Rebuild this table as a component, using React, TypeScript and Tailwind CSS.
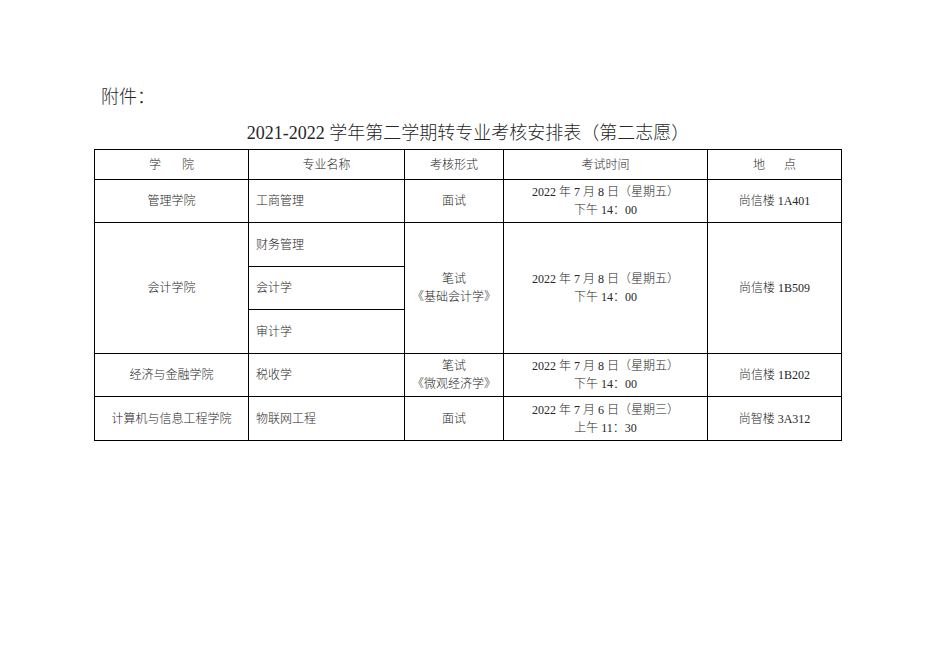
import React from "react";

const font = { fontFamily: '"Liberation Serif", "Noto Sans CJK SC", serif' };

function Cell({
  children,
  className = "",
  rowSpan,
  left,
}: {
  children?: React.ReactNode;
  className?: string;
  rowSpan?: number;
  left?: boolean;
}) {
  return (
    <td
      rowSpan={rowSpan}
      className={`border border-black align-middle p-0 ${left ? "text-left pl-[7px]" : "text-center"} ${className}`}
    >
      {children}
    </td>
  );
}

function TwoLine({ a, b }: { a: string; b: string }) {
  return (
    <div className="leading-[18px]">
      <div>{a}</div>
      <div>{b}</div>
    </div>
  );
}

export default function App() {
  return (
    <div className="w-[936px] h-[662px] bg-white text-[#262626] font-light" style={font}>
      <div className="pt-[85px] pl-[101px] text-[18px] leading-[24px]">附件：</div>
      <div className="mt-[12px] text-center text-[18px] leading-[24px]">
        2021-2022 学年第二学期转专业考核安排表（第二志愿）
      </div>
      <div className="mt-[4px] flex justify-center">
        <table className="border-collapse w-[747px] table-fixed text-[12px] leading-[16px]">
          <colgroup>
            <col className="w-[154px]" />
            <col className="w-[156px]" />
            <col className="w-[99px]" />
            <col className="w-[204px]" />
            <col className="w-[134px]" />
          </colgroup>
          <tbody>
            <tr className="h-[30px]">
              <Cell>
                <span>学</span>
                <span className="ml-[21px]">院</span>
              </Cell>
              <Cell>专业名称</Cell>
              <Cell>考核形式</Cell>
              <Cell>考试时间</Cell>
              <Cell>
                <span>地</span>
                <span className="ml-[19px]">点</span>
              </Cell>
            </tr>
            <tr className="h-[43px]">
              <Cell>管理学院</Cell>
              <Cell left>工商管理</Cell>
              <Cell>面试</Cell>
              <Cell>
                <TwoLine a="2022 年 7 月 8 日（星期五）" b="下午 14：00" />
              </Cell>
              <Cell>尚信楼 1A401</Cell>
            </tr>
            <tr className="h-[44px]">
              <Cell rowSpan={3}>会计学院</Cell>
              <Cell left>财务管理</Cell>
              <Cell rowSpan={3}>
                <TwoLine a="笔试" b="《基础会计学》" />
              </Cell>
              <Cell rowSpan={3}>
                <TwoLine a="2022 年 7 月 8 日（星期五）" b="下午 14：00" />
              </Cell>
              <Cell rowSpan={3}>尚信楼 1B509</Cell>
            </tr>
            <tr className="h-[43px]">
              <Cell left>会计学</Cell>
            </tr>
            <tr className="h-[44px]">
              <Cell left>审计学</Cell>
            </tr>
            <tr className="h-[43px]">
              <Cell>经济与金融学院</Cell>
              <Cell left>税收学</Cell>
              <Cell>
                <TwoLine a="笔试" b="《微观经济学》" />
              </Cell>
              <Cell>
                <TwoLine a="2022 年 7 月 8 日（星期五）" b="下午 14：00" />
              </Cell>
              <Cell>尚信楼 1B202</Cell>
            </tr>
            <tr className="h-[44px]">
              <Cell>计算机与信息工程学院</Cell>
              <Cell left>物联网工程</Cell>
              <Cell>面试</Cell>
              <Cell>
                <TwoLine a="2022 年 7 月 6 日（星期三）" b="上午 11：30" />
              </Cell>
              <Cell>尚智楼 3A312</Cell>
            </tr>
          </tbody>
        </table>
      </div>
    </div>
  );
}
